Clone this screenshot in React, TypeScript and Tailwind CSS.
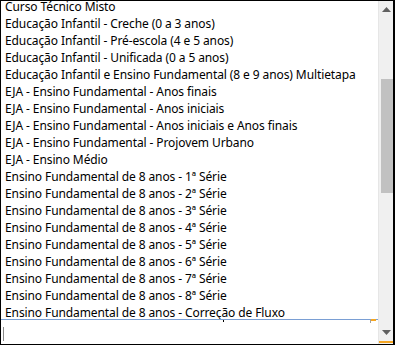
import React from "react";

const items = [
  "Curso Técnico Misto",
  "Educação Infantil - Creche (0 a 3 anos)",
  "Educação Infantil - Pré-escola (4 e 5 anos)",
  "Educação Infantil - Unificada (0 a 5 anos)",
  "Educação Infantil e Ensino Fundamental (8 e 9 anos) Multietapa",
  "EJA - Ensino Fundamental - Anos finais",
  "EJA - Ensino Fundamental - Anos iniciais",
  "EJA - Ensino Fundamental - Anos iniciais e Anos finais",
  "EJA - Ensino Fundamental - Projovem Urbano",
  "EJA - Ensino Médio",
  "Ensino Fundamental de 8 anos - 1ª Série",
  "Ensino Fundamental de 8 anos - 2ª Série",
  "Ensino Fundamental de 8 anos - 3ª Série",
  "Ensino Fundamental de 8 anos - 4ª Série",
  "Ensino Fundamental de 8 anos - 5ª Série",
  "Ensino Fundamental de 8 anos - 6ª Série",
  "Ensino Fundamental de 8 anos - 7ª Série",
  "Ensino Fundamental de 8 anos - 8ª Série",
  "Ensino Fundamental de 8 anos - Correção de Fluxo",
];

export default function App() {
  return (
    <div
      className="w-[395px] h-[345px] bg-white border-l border-t border-b border-r-2 border-black flex text-black"
      style={{ fontFamily: '"Noto Sans", "Open Sans", sans-serif' }}
    >
      {/* list + edit box */}
      <div className="flex-1 flex flex-col min-w-0">
        <div className="h-[318px] overflow-hidden">
          <ul className="mt-[-3px]">
            {items.map((item) => (
              <li
                key={item}
                className="h-[17px] leading-[17px] pl-1 text-[12px] tracking-[-0.1px] whitespace-nowrap"
              >
                {item}
              </li>
            ))}
          </ul>
        </div>
        <div className="relative h-px bg-[#7a9fd4]">
          <div className="absolute right-[2px] top-0 w-[5px] h-[2px] bg-[#f5a623]" />
          <div className="absolute right-[7px] top-px w-px h-[3px] bg-[#a0a0a0]" />
          <div className="absolute left-[222px] top-px w-px h-[2px] bg-black" />
        </div>
        <div className="flex-1 relative">
          <div className="absolute left-[2px] top-[7px] w-px h-[14px] bg-[#8a8a8a]" />
        </div>
      </div>

      {/* scrollbar */}
      <div className="w-[15px] bg-[#f0f0f0] border-l border-[#e6e6e6] flex flex-col">
        <div className="h-[17px] flex items-center justify-center">
          <svg width="9" height="5" viewBox="0 0 9 5">
            <path d="M0 5 L4.5 0 L9 5 Z" fill="#606060" />
          </svg>
        </div>
        <div className="flex-1 flex flex-col">
          <div className="h-[61px]" />
          <div className="h-[114px] ml-[2px] bg-[#c1c1c1]" />
        </div>
        <div className="h-[17px] flex items-center justify-center">
          <svg width="9" height="5" viewBox="0 0 9 5">
            <path d="M0 0 L9 0 L4.5 5 Z" fill="#606060" />
          </svg>
        </div>
        <div className="h-[2px] bg-[#f5a623] mb-px" />
      </div>
    </div>
  );
}
